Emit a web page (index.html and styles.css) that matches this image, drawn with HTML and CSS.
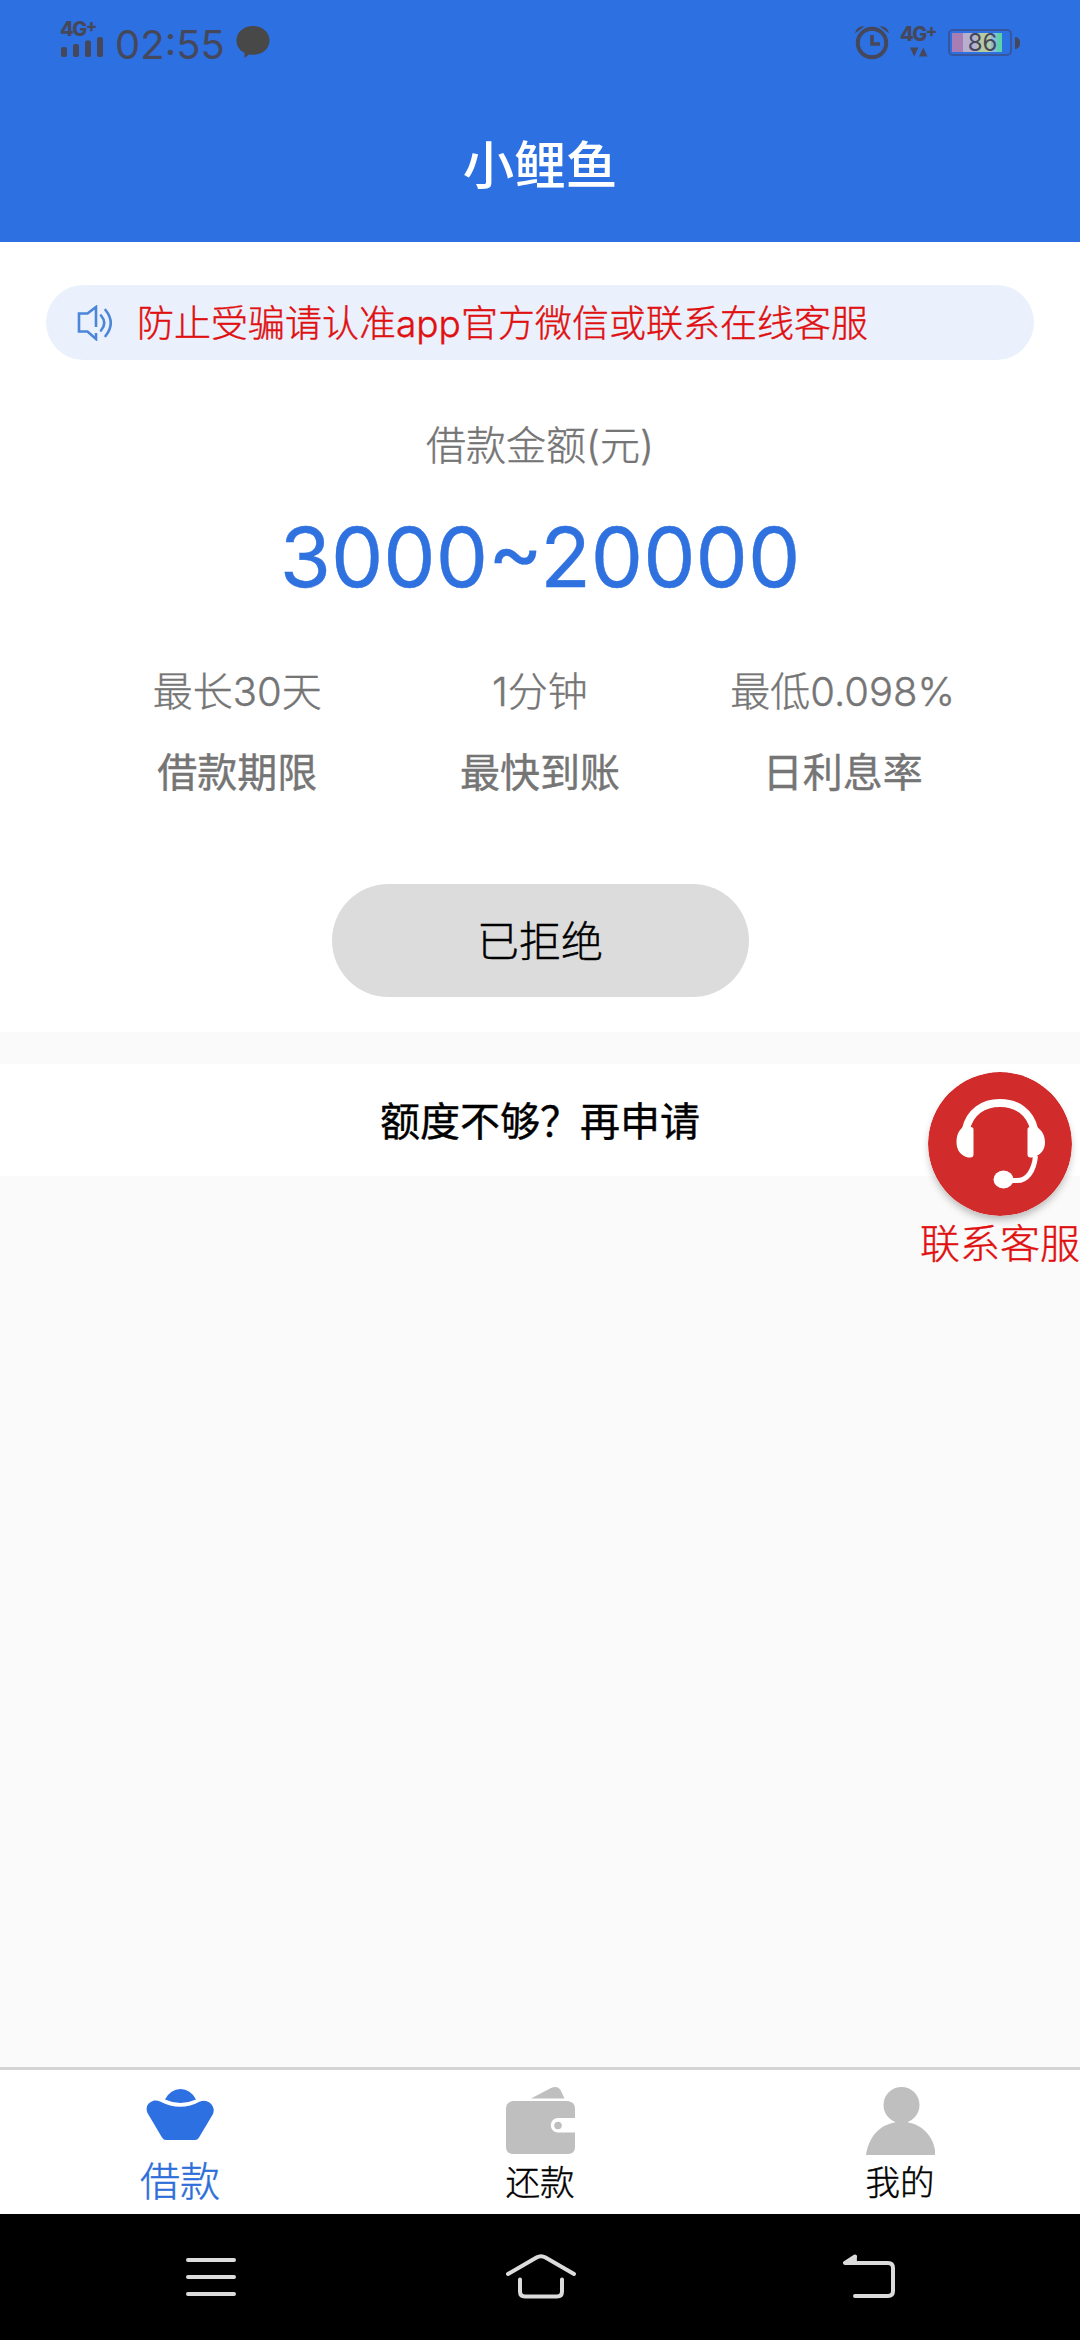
FILE: index.html
```html
<!DOCTYPE html>
<html lang="zh-CN">
<head>
<meta charset="utf-8">
<title>小鲤鱼</title>
<link rel="stylesheet" href="styles.css">
</head>
<body>
<div class="screen">
  <header class="header">
    <div class="status">
      <div class="status-left">
        <div class="signal">
          <span class="net">4G<sup class="plus">+</sup></span>
          <svg class="bars" width="43" height="20" viewBox="0 0 43 20"><rect x="0" y="10" width="6" height="10" rx="2"/><rect x="12" y="7" width="6" height="13" rx="2"/><rect x="24" y="3.500" width="6" height="16.500" rx="2"/><rect x="36" y="0" width="6" height="20" rx="2"/></svg>
        </div>
        <span class="clock">02:55</span>
        <svg class="bubble" width="34" height="33" viewBox="0 0 34 33"><path d="M17 0C26.500 0 33.500 6.300 33.500 14.500S26.500 28.800 17 28.800c-1.500 0-2.800-.1-4-.4L8.500 32V26.800C3.500 24.500 .5 20 .5 14.500.5 6.300 7.500 0 17 0z"/></svg>
      </div>
      <div class="status-right">
        <svg class="alarm" width="36" height="36" viewBox="0 0 36 36"><circle cx="18" cy="19" r="14.200" fill="none" stroke="#45485a" stroke-width="4"/><path d="M18 11v9h8" fill="none" stroke="#45485a" stroke-width="3.600"/><path d="M1 9.500A8 8 0 0 1 10.500 2.300zM35 9.500A8 8 0 0 0 25.500 2.300z"/></svg>
        <div class="data">
          <span class="net">4G<sup class="plus">+</sup></span>
          <svg width="18" height="10" viewBox="0 0 18 10"><path d="M0 .5h8.500L4.200 9.500zM9 9.500h8.500L13.300.5z"/></svg>
        </div>
        <div class="battery">
          <div class="cell">86</div>
          <span class="cap"></span>
        </div>
      </div>
    </div>
    <h1 class="title">小鲤鱼</h1>
  </header>

  <main class="offer">
    <div class="notice">
      <svg width="36" height="36" viewBox="0 0 36 36" fill="none" stroke="#4b86d8" stroke-width="2.600"><path d="M19 22V2L10.500 8.500H2v18h8.500L19 34v-6"/><path d="M24 10.500q6.500 7.500 0 15M28.500 5q10.500 13 0 26" stroke-linecap="round"/></svg>
      <span class="notice-text">防止受骗请认准app官方微信或联系在线客服</span>
    </div>
    <div class="label">借款金额(元)</div>
    <div class="amount">3000~20000</div>
    <div class="stats">
      <div class="stat"><span class="value">最长30天</span><span class="name">借款期限</span></div>
      <div class="stat"><span class="value">1分钟</span><span class="name">最快到账</span></div>
      <div class="stat"><span class="value">最低0.098%</span><span class="name">日利息率</span></div>
    </div>
    <button class="action">已拒绝</button>
  </main>

  <div class="more">额度不够？再申请</div>

  <div class="service">
    <svg width="144" height="144" viewBox="0 0 144 144"><circle cx="72" cy="72" r="72" fill="#d12c2b"/><path d="M38 57C42 40 55 31 72 31s30 9 34 26" fill="none" stroke="#fff" stroke-width="8"/><path d="M35 55h8q2.500 0 2.500 2.500v25q0 3-3 3H40C33 84 28.500 78 28.500 70.500S31 58 35 55zM109 55h-7q-2.500 0-2.500 2.500v25q0 3 3 3h2C112 84 117 78 117 70.500S113.500 58 109 55z" fill="#fff"/><path d="M107.500 84C106 99 99 108.500 89 108.500H80" fill="none" stroke="#fff" stroke-width="5"/><ellipse cx="75.500" cy="107.500" rx="10" ry="9" fill="#fff"/></svg>
    <span>联系客服</span>
  </div>

  <nav class="tabs">
    <a class="tab active">
      <svg width="68" height="69" viewBox="0 0 68 69"><path d="M19 13.500Q24.500 3 34.500 3T50 13.500Q34.500 20.500 19 13.500z"/><path d="M8 14.500Q11 14 14 15.500 34.500 26 54 15.500 59 13.500 63.500 16.500 69.500 21.500 67 28L53 51.500Q51.500 54 49 54H20Q17.500 54 16 51.500L1.500 27Q-2 18 8 14.500z"/></svg>
      <span>借款</span>
    </a>
    <a class="tab">
      <svg width="69" height="69" viewBox="0 0 69 69"><path d="M25 12.500L45 2Q52-1 55 5l3.500 7.500z"/><path fill-rule="evenodd" d="M7 15h55q7 1 7 8v9H52a7 7 0 0 0 0 14.500h17V61q0 6-6 7H6q-6-1-6-7V23q0-7 7-8z"/><circle cx="52" cy="39.500" r="3.800"/></svg>
      <span>还款</span>
    </a>
    <a class="tab">
      <svg width="69" height="69" viewBox="0 0 69 69"><circle cx="35.500" cy="19" r="18"/><path d="M0 69C3 51 13 39 29 36.500V33h13v3.500C57 39 67 51 69 64v5z"/></svg>
      <span>我的</span>
    </a>
  </nav>

  <div class="system">
    <svg width="52" height="46" viewBox="0 0 52 46"><path d="M3 6h46M3 23h46M3 40h46"/></svg>
    <svg width="72" height="46" viewBox="0 0 72 46"><path d="M3 20L31.500 3.500Q36 1 40.500 3.500L69 20M15 25.500v12q0 5 5 5h32q5 0 5-5v-12"/></svg>
    <svg width="56" height="46" viewBox="0 0 56 46"><path d="M13 2.500L3 9h43q5 0 5 5V37q0 5-5 5H13"/><path class="tip" d="M14 2L2 9h12z"/></svg>
  </div>
</div>
</body>
</html>
```

FILE: styles.css
```css
* { box-sizing: border-box; }
body {
  margin: 0;
  font-family: Inter, "Noto Sans CJK SC", sans-serif;
  font-weight: 300;
  -webkit-text-stroke-width: .4px;
  background: #fafafa;
  color: #000;
}
.screen {
  position: relative;
  display: flex;
  flex-direction: column;
  width: 1080px;
  height: 2340px;
  background: #fafafa;
}
svg { display: block; flex: none; }

.header { height: 242px; background: #2d70e2; -webkit-text-stroke-width: 0; }
.status {
  display: flex;
  justify-content: space-between;
  height: 88px;
  padding: 0 60px;
  color: #45485a;
  fill: #45485a;
}
.status-left, .status-right { display: flex; align-items: flex-start; }
.signal { width: 46px; padding-top: 21px; }
.net {
  display: block;
  height: 16px;
  font: 800 20px/16px Inter, sans-serif;
  letter-spacing: -1.5px;
  white-space: nowrap;
}
.plus { display: inline-block; font-size: 17px; line-height: 10px; vertical-align: 4px; }
.bars { margin-left: 1px; }
.clock {
  width: 112px;
  margin-left: 9px;
  padding-top: 25px;
  font-size: 40px;
  font-weight: 400;
  line-height: 40px;
  white-space: nowrap;
}
.bubble { margin: 26px 0 0 9px; fill: #484848; }
.alarm { margin-top: 24px; }
.data { width: 38px; margin: 26px 10px 0; }
.data svg { margin: 5px 0 0 10px; }
.battery { display: flex; align-items: center; gap: 3px; margin-top: 29px; }
.cell {
  width: 64px;
  height: 27px;
  border: 2px solid #37569e;
  border-radius: 5px;
  padding-left: 5px;
  background: linear-gradient(90deg, #a77db4 11px, #b5b0d2 11px 25px, #b8cba0 25px 39px, #86bce3 39px 45px, #5dd3a5 45px) 2px 2px / 50px 19px no-repeat;
  font-size: 24px;
  font-weight: 400;
  line-height: 23px;
  text-align: center;
}
.cap { width: 5px; height: 12px; border-radius: 0 6px 6px 0; background: #45485a; }
.title {
  margin: 0;
  font-size: 51.5px;
  font-weight: 500;
  line-height: 154px;
  text-align: center;
  color: #fff;
}

.offer { height: 790px; padding-top: 43px; background: #fff; color: #757575; text-align: center; }
.notice {
  display: flex;
  align-items: center;
  gap: 24px;
  height: 75px;
  margin: 0 46px;
  padding-left: 31px;
  border-radius: 38px;
  background: #eaf0fc;
}
.notice-text { padding-top: 3px; font-size: 37px; line-height: 40px; color: #e01010; white-space: nowrap; }
.label { margin-top: 66px; font-size: 40px; line-height: 40px; }
.amount {
  margin-top: 49px;
  font-size: 83px;
  font-weight: 400;
  line-height: 84px;
  color: #2f71df;
}
.stats { display: grid; grid-template-columns: repeat(3, 1fr); margin: 73px 86px 0; }
.stat { display: flex; flex-direction: column; gap: 41px; font-size: 40px; line-height: 40px; white-space: nowrap; }
.name { font-weight: 400; }
.action {
  display: block;
  width: 417px;
  height: 113px;
  margin: 91px auto 0;
  padding: 2px 0 0;
  border: 0;
  border-radius: 57px;
  background: #dcdcdc;
  font: inherit;
  font-size: 42px;
  line-height: 111px;
  color: #000;
}
.more {
  height: 112px;
  margin-top: 32px;
  background: #fff;
  font-size: 40px;
  font-weight: 400;
  line-height: 116px;
  text-align: center;
}

.service {
  position: absolute;
  top: 1072px;
  right: 0;
  width: 160px;
  font-size: 40px;
  line-height: 56px;
  color: #e01010;
  white-space: nowrap;
}
.service svg { margin-left: 8px; border-radius: 50%; box-shadow: 0 5px 8px -2px rgba(0, 0, 0, .3); }

.tabs {
  display: grid;
  grid-template-columns: repeat(3, 1fr);
  height: 147px;
  margin-top: auto;
  border-top: 3px solid #d3d3d3;
  background: #fff;
}
.tab {
  display: flex;
  flex-direction: column;
  align-items: center;
  padding-top: 16px;
  fill: #bfbfbf;
  font-size: 34.5px;
}
.tab span { margin-top: 8px; line-height: 40px; }
.active { fill: #2d70e2; font-size: 40px; color: #2d6ed8; }
.active span { margin-top: 7px; }

.system {
  display: grid;
  grid-template-columns: 320px 337px 56px;
  height: 126px;
  padding: 40px 0 0 185px;
  background: #000;
  fill: none;
  stroke: #dcdcdc;
  stroke-width: 4;
  stroke-linecap: round;
  stroke-linejoin: round;
}
.tip { fill: #dcdcdc; stroke-width: 1; }
```
